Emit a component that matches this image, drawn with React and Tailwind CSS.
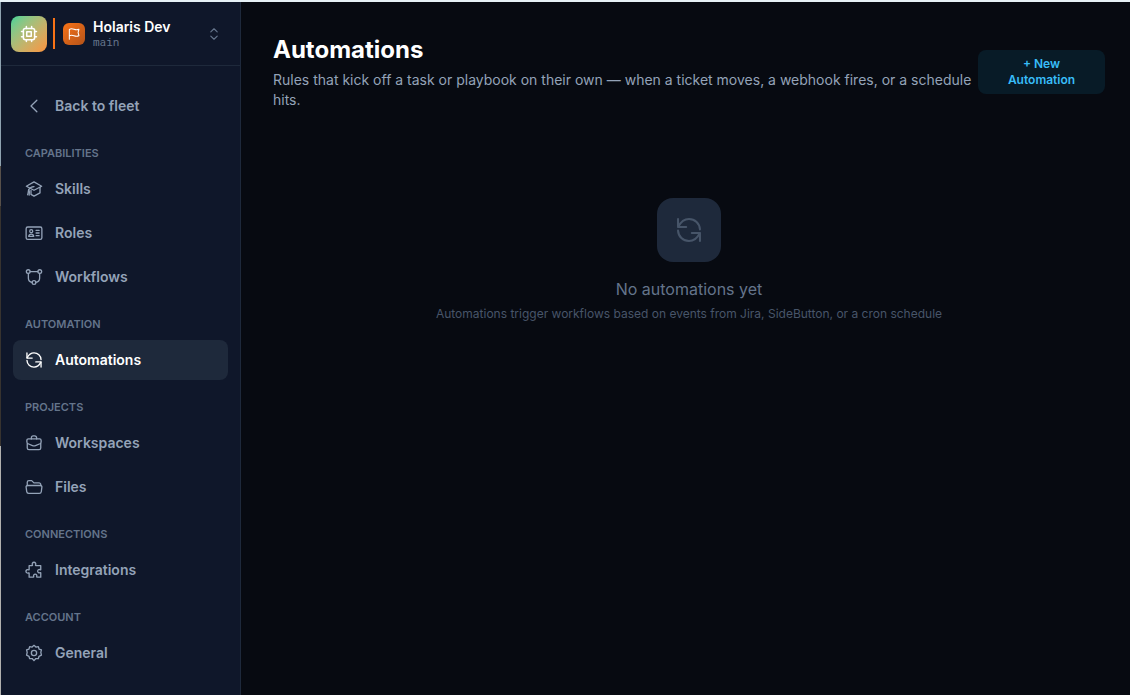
function Icon({ children, size = 'size-[18px]', width = 1.75 }) {
    return (
        <svg
            viewBox="0 0 24 24"
            fill="none"
            stroke="currentColor"
            strokeWidth={width}
            strokeLinecap="round"
            strokeLinejoin="round"
            aria-hidden="true"
            className={`${size} shrink-0`}
        >
            {children}
        </svg>
    );
}

const refreshPaths = (
    <>
        <path d="M2.6 2.6v6.8h7" />
        <path d="M2.8 9.200C5 4.800 8 2.500 12 2.500a9.400 9.400 0 0 1 9.400 9" />
        <path d="M21.400 21.400v-6.800h-7" />
        <path d="M21.200 14.800C19 19.200 16 21.500 12 21.500a9.400 9.400 0 0 1-9.400-9" />
    </>
);

const icons = {
    back: <path d="M15.8 4.3 8 12l7.8 7.7" />,
    skills: (
        <>
            <path d="M12 2.5 1.8 8.3 12 13.7l10.2-5.4L12 2.5Z" />
            <path d="M12 8.8c-3.3.3-5.8 1.6-7 3.8-.8 1.8-.3 4.6-1.5 7" />
            <path d="M5 12.8c1 2 1.2 4.4.5 7.4" />
            <path d="M8 14v5.2l4 2.3 8-4.3V9.8" />
        </>
    ),
    roles: (
        <>
            <rect x="1.5" y="4" width="21" height="16.5" rx="2.2" />
            <circle cx="8.3" cy="9.6" r="2" />
            <path d="M5 16.5c.2-2 1.5-3 3.3-3s3.1 1 3.3 3H5ZM14.8 8.5h4M14.8 12h4M14.8 15.5h4" />
        </>
    ),
    workflows: (
        <>
            <circle cx="4.3" cy="4.8" r="2.5" />
            <circle cx="19.7" cy="4.8" r="2.5" />
            <circle cx="12" cy="19.3" r="2.5" />
            <path d="M6.8 4.8h10.4M4.5 7.3v6.2c0 3 1.8 5 5 5.6M19.5 7.3v6.2c0 3-1.8 5-5 5.6" />
        </>
    ),
    automations: refreshPaths,
    workspaces: (
        <>
            <path d="M8.500 6.500V5a2.500 2.500 0 0 1 2.500-2.500h2A2.500 2.500 0 0 1 15.500 5v1.500" />
            <path d="M2.500 8.500a2 2 0 0 1 2-2h15a2 2 0 0 1 2 2v2c0 1.200-.6 2-1.600 2.500L14 15.500a5 5 0 0 1-4 0L4.100 13a2.600 2.600 0 0 1-1.600-2.500v-2Z" />
            <path d="M3 13v5.500a2.300 2.300 0 0 0 2.300 2.300h13.400a2.300 2.300 0 0 0 2.300-2.300V13" />
        </>
    ),
    files: (
        <>
            <path d="M3 10V5.8a2.3 2.3 0 0 1 2.3-2.3h3.6l3 3h6.8A2.300 2.300 0 0 1 21 8.800V10" />
            <path d="M3.500 10h17a2 2 0 0 1 2 2.300l-.8 6a2.600 2.600 0 0 1-2.600 2.200H4.900a2.600 2.600 0 0 1-2.600-2.200l-.8-6a2 2 0 0 1 2-2.300Z" />
        </>
    ),
    integrations: (
        <path d="M5.500 6.200h4c.6 0 .7-.5.400-1a2.400 2.400 0 1 1 4.200 0c-.3.500-.2 1 .4 1h6.500v5c0 .6-.5.700-1 .4a2.200 2.200 0 1 0 0 4c.5-.3 1-.2 1 .4v5.500h-5c-.6 0-.7-.5-.4-1a2.200 2.200 0 1 0-4 0c.3.500.2 1-.4 1H5.500v-5.200c0-.6-.5-.7-1-.4a2.300 2.300 0 1 1 0-4.200c.5.300 1 .2 1-.4V6.200Z" />
    ),
    general: (
        <>
            <path d="m12 1.800 2.500 2.300 3.300-.6.900 3.200 3.200 1.200-.8 3.300.8 3.700-3.200 1.500-.9 3.200-3.300-.2-2.500 2.800-2.500-2.800-3.300.2-.9-3.200-3.200-1.500.8-3.700-.8-3.300 3.200-1.200.9-3.200 3.300.6L12 1.800Z" />
            <circle cx="12" cy="12" r="3.500" />
        </>
    ),
};

const sections = [
    {
        title: 'Capabilities',
        items: [
            { label: 'Skills', icon: 'skills' },
            { label: 'Roles', icon: 'roles' },
            { label: 'Workflows', icon: 'workflows' },
        ],
    },
    { title: 'Automation', items: [{ label: 'Automations', icon: 'automations', active: true }] },
    {
        title: 'Projects',
        items: [
            { label: 'Workspaces', icon: 'workspaces' },
            { label: 'Files', icon: 'files' },
        ],
    },
    { title: 'Connections', items: [{ label: 'Integrations', icon: 'integrations' }] },
    { title: 'Account', items: [{ label: 'General', icon: 'general' }] },
];

function NavItem({ label, icon, active }) {
    return (
        <a
            href="#"
            aria-current={active ? 'page' : undefined}
            className={`flex h-10 items-center gap-3 rounded-lg px-3 text-sm font-semibold ${
                active ? 'bg-[#1e293b] text-white' : 'text-[#94a3b8] hover:bg-[#1e293b]'
            }`}
        >
            <Icon>{icons[icon]}</Icon>
            {label}
        </a>
    );
}

function Sidebar() {
    return (
        <aside className="flex w-60 shrink-0 flex-col border-r border-[#1e293b] bg-[#0f172a]">
            <div className="flex h-16 items-center border-b border-[#1e293b] pl-[10px] pr-[19px]">
                <div className="flex size-9 items-center justify-center rounded-lg bg-linear-to-br from-[#34d399] to-[#fb923c] text-white">
                    <Icon width={2}>
                        <rect x="4.5" y="4.5" width="15" height="15" rx="2.5" />
                        <rect x="9" y="9" width="6" height="6" />
                        <path d="M8.5 2v2.5M15.5 2v2.5M8.5 19.5V22M15.5 19.5V22M2 8.5h2.5M2 15.5h2.5M19.5 8.5H22M19.5 15.5H22" />
                    </Icon>
                </div>
                <div className="ml-1.5 h-[31px] w-0.5 bg-[#f97316]" />
                <button type="button" className="ml-2 flex flex-1 items-center text-left">
                    <span className="flex size-[22px] items-center justify-center rounded-md bg-linear-to-br from-[#f97316] to-[#b45319] text-white">
                        <Icon size="size-3.5">
                            <path d="M4 21V4c3-1.500 5.500-1 8 0s5 1.500 8.500 0l-1.500 5.500L20.500 15c-3.500 1.500-6 1-8.500 0s-5-1.500-8 0" />
                        </Icon>
                    </span>
                    <span className="ml-2 flex flex-1 flex-col">
                        <span className="text-sm leading-4 font-semibold text-white">Holaris Dev</span>
                        <span className="font-['Roboto_Mono','Liberation_Mono',monospace] text-[11px] leading-[14px] text-[#64748b]">
                            main
                        </span>
                    </span>
                    <span className="text-[#64748b]">
                        <Icon size="size-3.5" width={2}>
                            <path d="m6.500 8.500 5.500-5.500 5.500 5.500M6.500 15.500l5.500 5.500 5.500-5.500" />
                        </Icon>
                    </span>
                </button>
            </div>

            <nav className="px-3 pt-5 pb-5">
                <NavItem label="Back to fleet" icon="back" />
                {sections.map((section) => (
                    <section key={section.title} className="pt-[19px]">
                        <h2 className="mb-2 px-3 text-[11px] leading-4 font-semibold text-[#64748b] uppercase">
                            {section.title}
                        </h2>
                        <div className="flex flex-col gap-1">
                            {section.items.map((item) => (
                                <NavItem key={item.label} {...item} />
                            ))}
                        </div>
                    </section>
                ))}
            </nav>
        </aside>
    );
}

function App() {
    return (
        <div className="flex min-h-screen border-t-2 border-[#e6f1f6] bg-[#070a11] font-['Inter','Liberation_Sans',sans-serif]">
            <div className="flex w-px shrink-0 flex-col">
                <div className="h-[164px] bg-[#8fa3b0]" />
                <div className="h-10 bg-[#57504a]" />
                <div className="h-60 bg-[#37332f]" />
                <div className="flex-1 bg-[#b0b0ae]" />
            </div>
            <Sidebar />

            <main className="min-w-0 flex-1 pt-8 pr-[25px] pl-8">
                <header className="flex items-center gap-1">
                    <div className="flex-1">
                        <h1 className="text-2xl leading-8 font-bold text-white">Automations</h1>
                        <p className="mt-1 text-sm leading-5 text-[#94a3b8]">
                            Rules that kick off a task or playbook on their own — when a ticket moves, a webhook fires,
                            or a schedule hits.
                        </p>
                    </div>
                    <button
                        type="button"
                        className="w-[127px] rounded-lg bg-[#081b27] px-4 py-1.5 text-xs font-semibold text-[#38bdf8]"
                    >
                        + New Automation
                    </button>
                </header>

                <div className="flex flex-col items-center pt-[88px] text-center">
                    <div className="flex size-16 items-center justify-center rounded-2xl bg-[#1e293b] text-[#475569]">
                        <Icon size="size-7">{refreshPaths}</Icon>
                    </div>
                    <p className="mt-4 text-base leading-[22px] text-[#64748b]">No automations yet</p>
                    <p className="mt-1.5 text-xs text-[#475569]">
                        Automations trigger workflows based on events from Jira, SideButton, or a cron schedule
                    </p>
                </div>
            </main>
        </div>
    );
}

export default App;
